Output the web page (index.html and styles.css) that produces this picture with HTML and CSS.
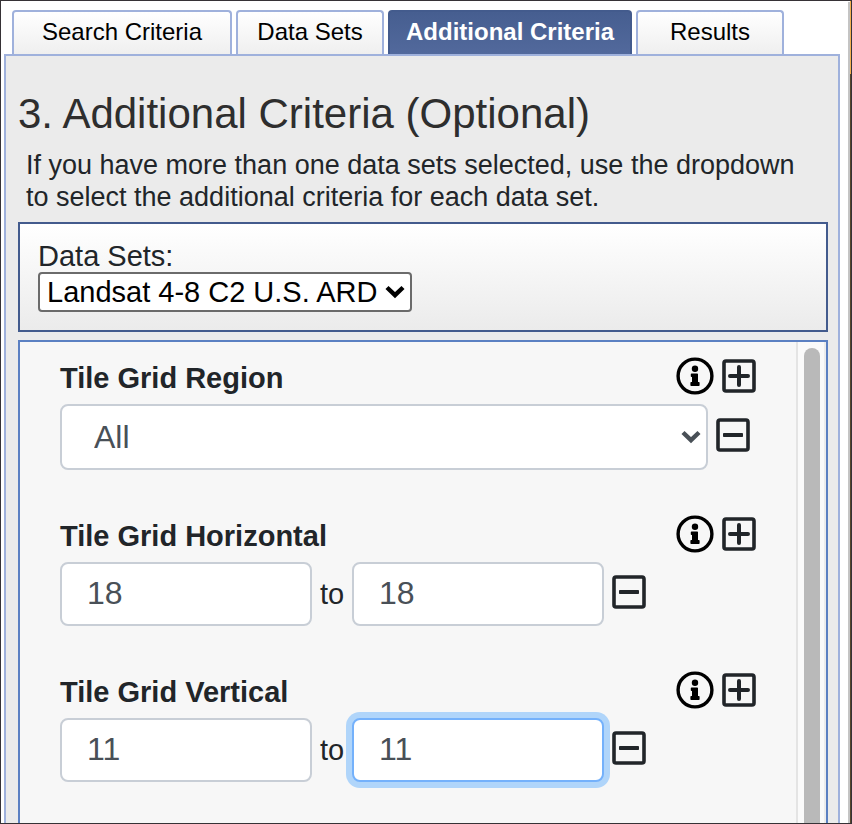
FILE: index.html
```html
<!DOCTYPE html>
<html lang="en">
<head>
<meta charset="utf-8">
<title>Additional Criteria</title>
<link rel="stylesheet" href="styles.css">
</head>
<body>
<svg class="sprite" aria-hidden="true">
  <symbol id="info" viewBox="0 0 38 38">
    <circle cx="19" cy="19" r="16.9" fill="none" stroke="currentColor" stroke-width="3.4"/>
    <circle cx="19" cy="11.7" r="3.2" fill="currentColor"/>
    <path fill="currentColor" d="M15.600 16.400h5.600q.8 0 .8.800v7.800h.8q.8 0 .8.800v2.400q0 .8-.8.800h-7.600q-.8 0-.8-.8v-2.400q0-.8.800-.8h.8v-5h-.4q-.8 0-.8-.8v-2q0-.8.800-.8z"/>
  </symbol>
  <symbol id="plus" viewBox="0 0 34 34">
    <rect x="2" y="2" width="30" height="30" rx="2" fill="none" stroke="currentColor" stroke-width="3.600"/>
    <path d="M8 17h18M17 8v18" stroke="currentColor" stroke-width="4" stroke-linecap="round" fill="none"/>
  </symbol>
  <symbol id="minus" viewBox="0 0 34 34">
    <rect x="2" y="2" width="30" height="30" rx="2" fill="none" stroke="currentColor" stroke-width="3.600"/>
    <rect x="7" y="15" width="20" height="4" rx=".8" fill="currentColor"/>
  </symbol>
  <symbol id="chevron" viewBox="0 0 20 14">
    <path d="M2 2.500 10 10.200l8-7.700" fill="none" stroke="currentColor" stroke-width="4.400"/>
  </symbol>
</svg>
<div class="frame">
  <main class="sidebar">
    <nav class="tabs">
      <button class="tab tab-search">Search Criteria</button>
      <button class="tab tab-small">Data Sets</button>
      <button class="tab tab-active">Additional Criteria</button>
      <button class="tab tab-small">Results</button>
    </nav>
    <section class="panel">
      <h1>3. Additional Criteria (Optional)</h1>
      <p class="intro">If you have more than one data sets selected, use the dropdown to select the additional criteria for each data set.</p>
      <div class="datasets">
        <label for="dataset">Data Sets:</label>
        <div class="select-wrap dataset-wrap">
          <select id="dataset"><option>Landsat 4-8 C2 U.S. ARD</option></select>
          <svg class="chevron"><use href="#chevron"/></svg>
        </div>
      </div>
      <div class="criteria">
        <form class="fields">
          <div class="group">
            <div class="head">
              <label for="region">Tile Grid Region</label>
              <button type="button" class="icon info" aria-label="Info"><svg><use href="#info"/></svg></button>
              <button type="button" class="icon" aria-label="Add"><svg><use href="#plus"/></svg></button>
            </div>
            <div class="row">
              <div class="select-wrap region-wrap">
                <select id="region" class="control"><option>All</option></select>
                <svg class="chevron"><use href="#chevron"/></svg>
              </div>
              <button type="button" class="icon" aria-label="Remove"><svg><use href="#minus"/></svg></button>
            </div>
          </div>
          <div class="group">
            <div class="head">
              <label for="h-from">Tile Grid Horizontal</label>
              <button type="button" class="icon info" aria-label="Info"><svg><use href="#info"/></svg></button>
              <button type="button" class="icon" aria-label="Add"><svg><use href="#plus"/></svg></button>
            </div>
            <div class="row">
              <input id="h-from" class="control" type="text" value="18">
              <label class="to" for="h-to">to</label>
              <input id="h-to" class="control" type="text" value="18">
              <button type="button" class="icon" aria-label="Remove"><svg><use href="#minus"/></svg></button>
            </div>
          </div>
          <div class="group">
            <div class="head">
              <label for="v-from">Tile Grid Vertical</label>
              <button type="button" class="icon info" aria-label="Info"><svg><use href="#info"/></svg></button>
              <button type="button" class="icon" aria-label="Add"><svg><use href="#plus"/></svg></button>
            </div>
            <div class="row">
              <input id="v-from" class="control" type="text" value="11">
              <label class="to" for="v-to">to</label>
              <input id="v-to" class="control focused" type="text" value="11">
              <button type="button" class="icon" aria-label="Remove"><svg><use href="#minus"/></svg></button>
            </div>
          </div>
        </form>
        <div class="track"><div class="thumb"></div></div>
      </div>
    </section>
  </main>
  <div class="divider"></div>
  <div class="map-edge"></div>
</div>
</body>
</html>
```
FILE: styles.css
```css
* { box-sizing: border-box; }
body {
  margin: 0;
  background: #fff;
  color: #212529;
  font-family: "Liberation Sans", Arial, sans-serif;
  font-size: 29px;
}
button, input, select { font: inherit; margin: 0; }
.sprite { display: none; }
.frame {
  display: flex;
  min-height: 100vh;
  border: 1px solid #363236;
}
.sidebar {
  flex: 1;
  display: flex;
  flex-direction: column;
  min-width: 0;
  padding: 9px 8px 0 3px;
}
.divider { width: 2px; margin-top: 1px; background: #c4c4c4; }
.map-edge { width: 1px; background: linear-gradient(#f3b04f 73px, #57472c 73px); }

.tabs { display: flex; gap: 4px; padding-left: 8px; }
.tab {
  height: 44px;
  padding: 0 0 2px;
  border: 2px solid #9fb1dc;
  border-bottom: 0;
  border-radius: 4px 4px 0 0;
  background: linear-gradient(#fff, #efefef);
  color: #000;
  font-size: 24px;
}
.tab-search { width: 220px; }
.tab-small { width: 148px; }
.tab-active {
  width: 244px;
  border-color: #435b8d;
  background: linear-gradient(#465e90, #52699c);
  color: #fff;
  font-weight: bold;
}

.panel {
  flex: 1;
  display: flex;
  flex-direction: column;
  padding: 34px 10px 0 12px;
  border: 2px solid #9fb1dc;
  border-bottom: 0;
  background: #ebebeb;
}
h1 {
  margin: 0;
  color: #2e2e2e;
  font-size: 42px;
  font-weight: normal;
  line-height: 48px;
}
.intro {
  margin: 11px 8px 9px;
  font-size: 27px;
  line-height: 32px;
}
.datasets {
  display: flex;
  flex-direction: column;
  align-items: flex-start;
  margin-bottom: 8px;
  padding: 16px 18px 18px;
  border: 2px solid #435b8d;
  background: linear-gradient(#fff, #ebebeb);
}
.datasets label { line-height: 32px; }
.select-wrap { position: relative; }
.chevron {
  position: absolute;
  top: 0;
  bottom: 0;
  right: 7px;
  width: 20px;
  height: 14px;
  margin: auto 0;
  pointer-events: none;
}
.dataset-wrap { color: #000; }
select { appearance: none; display: block; color: inherit; }
#dataset {
  height: 40px;
  padding: 0 30px 0 7px;
  border: 2px solid #6b6b6b;
  border-radius: 4px;
  background: #fff;
}

.criteria {
  flex: 1;
  display: flex;
  border: 2px solid #5b80c2;
  border-bottom: 0;
  background: #f7f7f7;
}
.fields { flex: 1; min-width: 0; padding: 12px 40px 0; }
.group + .group { margin-top: 42px; }
.head {
  display: flex;
  align-items: center;
  gap: 8px;
  height: 44px;
  margin-bottom: 6px;
}
.head label { flex: 1; padding-top: 4px; font-weight: bold; }
.icon {
  flex: none;
  width: 34px;
  height: 34px;
  padding: 0;
  border: 0;
  background: none;
  color: #212529;
}
.icon svg { display: block; width: 100%; height: 100%; }
.info { width: 38px; height: 38px; color: #000; }
.row { display: flex; align-items: center; gap: 8px; }
.row .icon { margin-bottom: 4px; }
.region-wrap { flex: 1; color: #495057; }
.region-wrap + .icon { margin-right: 6px; }
.control {
  height: 64px;
  border: 2px solid #c8ced6;
  border-radius: 8px;
  background: #fff;
  color: #495057;
  font-size: 32px;
}
select.control { width: 100%; height: 66px; padding: 0 32px; }
input.control { flex: 0 1 252px; min-width: 0; padding: 0 25px 2px; }
.control.focused { border-color: #74b1fb; box-shadow: 0 0 0 6px #b0d5fa; }
.to { position: relative; z-index: 1; width: 24px; }

.track {
  width: 30px;
  display: flex;
  padding: 6px 4px 0 6px;
  border-left: 2px solid #e4e4e4;
  border-right: 2px solid #ececec;
  background: #fafafa;
}
.thumb { width: 16px; border-radius: 8px 8px 0 0; background: #b9b9b9; }
```
